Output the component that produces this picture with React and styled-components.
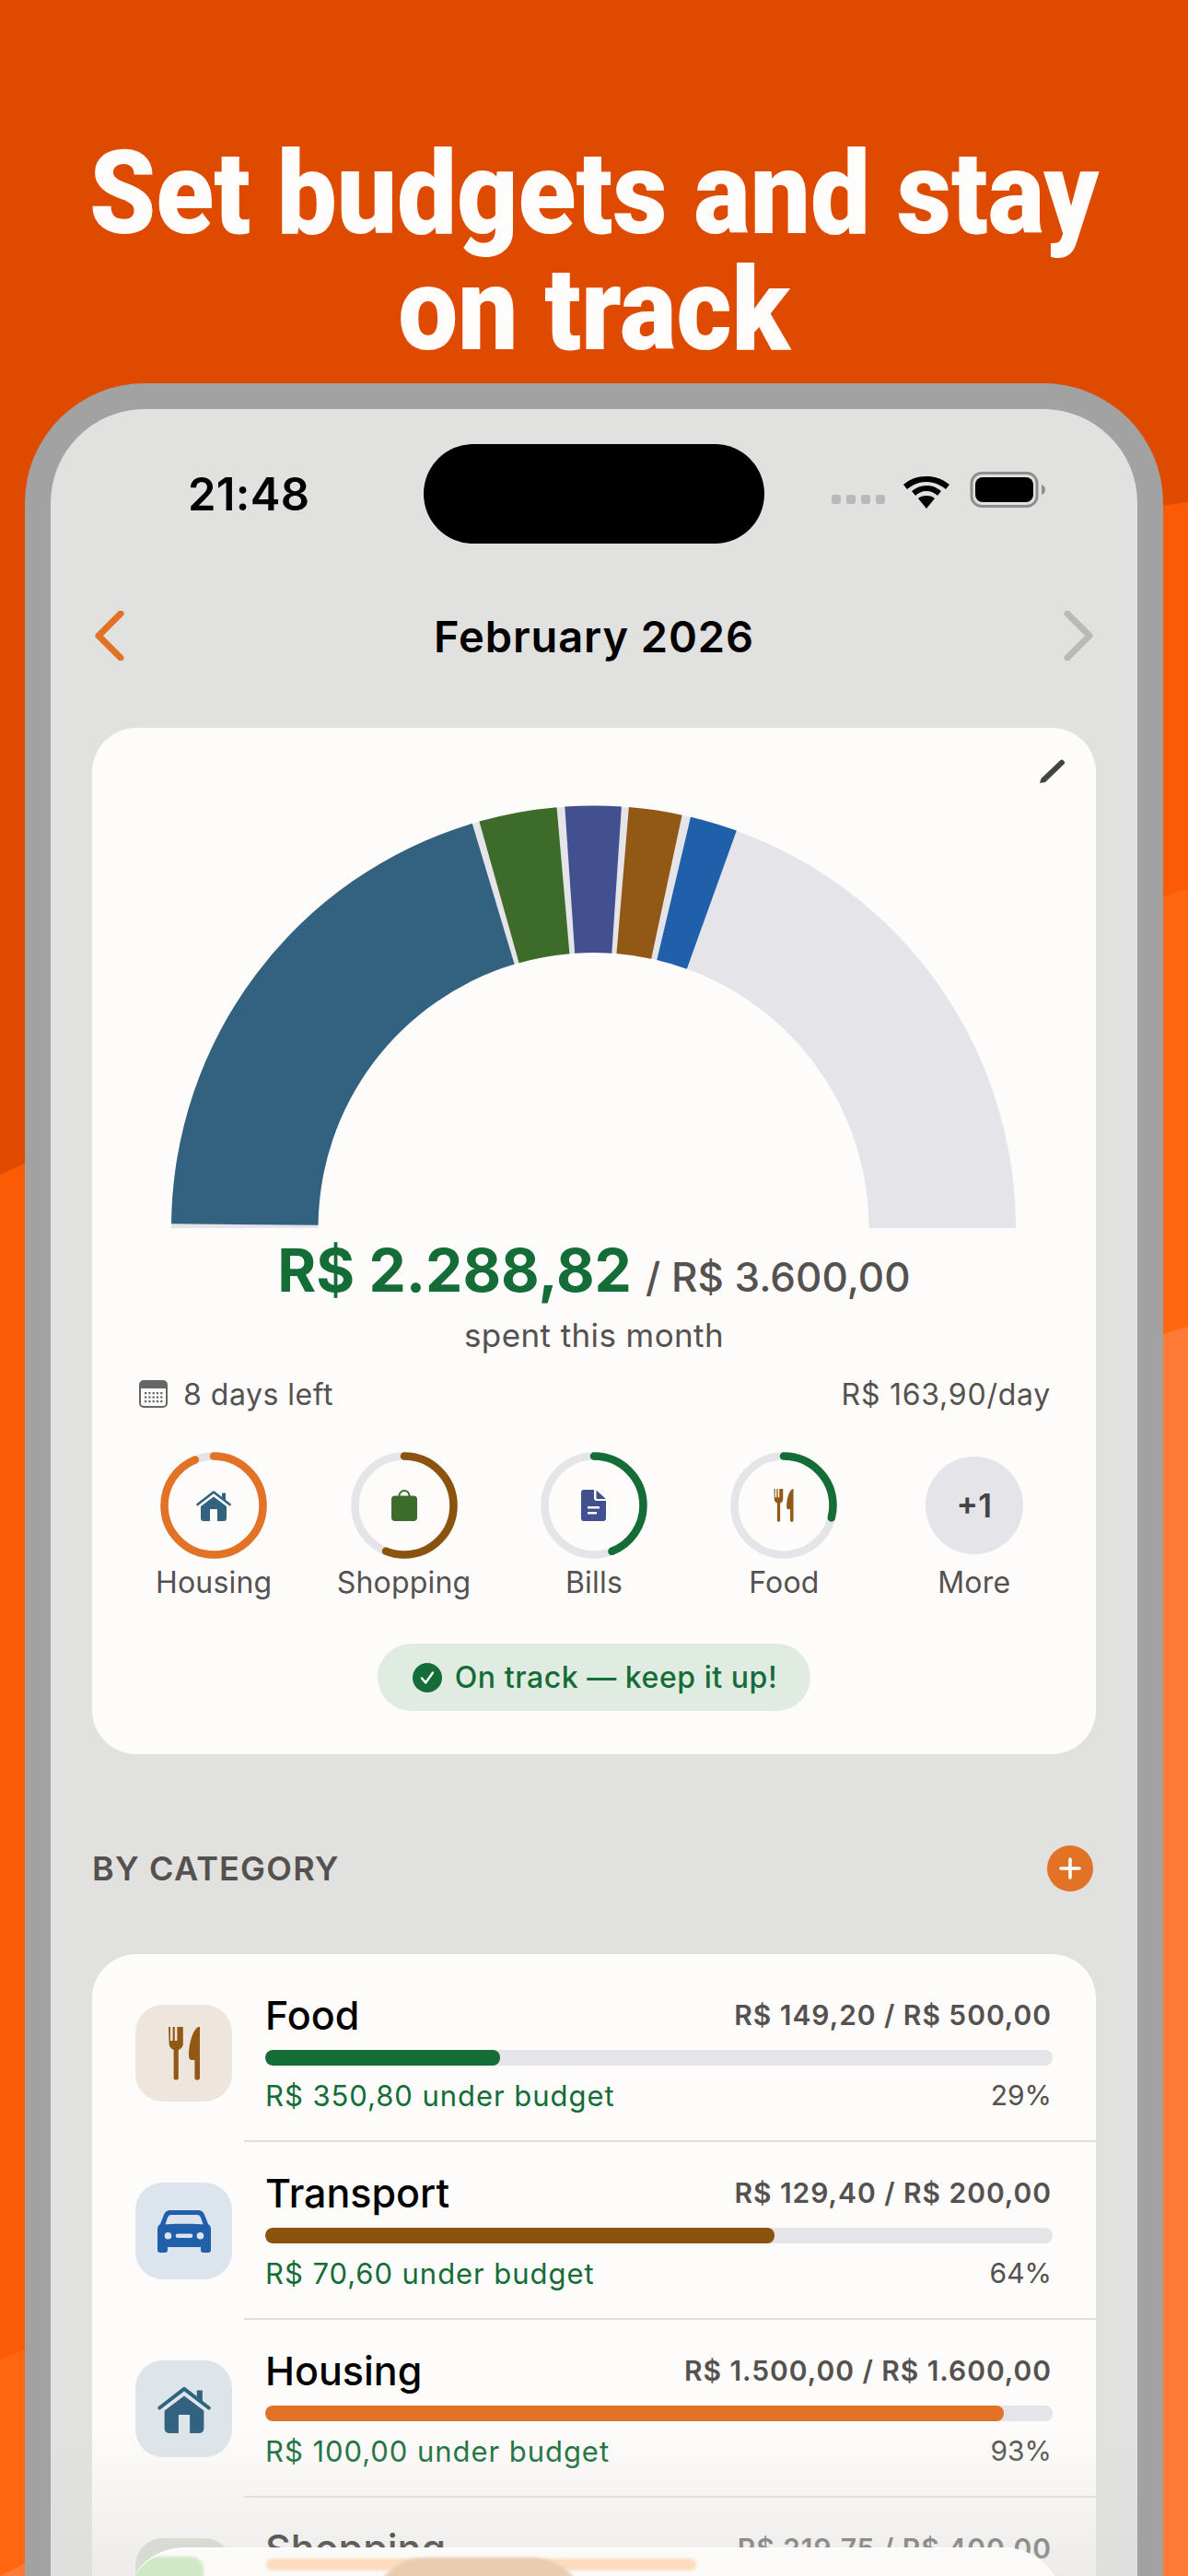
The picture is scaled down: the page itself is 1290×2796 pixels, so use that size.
import React from "react";
import styled, { createGlobalStyle } from "styled-components";

const Global = createGlobalStyle`
  html, body { margin: 0; padding: 0; background: #de4b00; }
  * { box-sizing: border-box; }
  #root { width: 1290px; height: 2796px; overflow: hidden; }
`;

const ORANGE = "#e27226";
const GREEN = "#146c37";
const GREY = "#555150";
const TRACK = "#e4e4e9";
const BLUE = "#32627f";
const OLIVE = "#3c6b2a";
const INDIGO = "#42508f";
const BROWN = "#925916";
const ROYAL = "#2060ab";

const Page = styled.div`
  position: relative;
  width: 1290px;
  height: 2796px;
  overflow: hidden;
  display: flex;
  flex-direction: column;
  font-family: Inter, "Liberation Sans", sans-serif;
`;
const Backdrop = styled.svg`
  position: absolute;
  inset: 0;
`;
const Headline = styled.h1`
  position: relative;
  margin: 147px 0 17px;
  font-family: Roboto, "Liberation Sans", sans-serif;
  font-weight: 900;
  font-size: 127px;
  line-height: 126px;
  color: #fffdfb;
  text-align: center;
  white-space: nowrap;
  transform: scaleX(0.91);
`;
const Bezel = styled.div`
  position: relative;
  flex: 1;
  min-height: 0;
  margin: 0 27px;
  padding: 28px 28px 0;
  background: #a2a2a2;
  border-radius: 130px 130px 0 0;
  display: flex;
`;
const Screen = styled.div`
  position: relative;
  flex: 1;
  min-height: 0;
  padding: 38px 45px 0;
  background: #e1e1df;
  border-radius: 102px 102px 0 0;
  overflow: hidden;
`;
const StatusBar = styled.div`
  display: flex;
  align-items: center;
  height: 108px;
`;
const Clock = styled.div`
  width: 360px;
  padding-left: 104px;
  font-size: 49px;
  font-weight: 600;
  letter-spacing: 0.3px;
  color: #000;
  white-space: nowrap;
`;
const Island = styled.div`
  width: 370px;
  height: 108px;
  border-radius: 54px;
  background: #000;
`;
const StatusIcons = styled.svg`
  margin-left: 73px;
  flex: none;
`;
const MonthNav = styled.div`
  margin-top: 70px;
  height: 60px;
  display: flex;
  align-items: center;
  justify-content: space-between;
  padding: 0 3px 0 3px;
`;
const MonthTitle = styled.div`
  font-size: 47px;
  font-weight: 600;
  letter-spacing: 0.9px;
  color: #000;
`;
const SummaryCard = styled.section`
  position: relative;
  margin-top: 70px;
  padding-bottom: 47px;
  background: #fdfcfa;
  border-radius: 48px;
`;
const EditIcon = styled.svg`
  position: absolute;
  top: 32px;
  right: 31px;
`;
const Gauge = styled.svg`
  display: block;
`;
const AmountLine = styled.div`
  margin-top: 8px;
  height: 72px;
  line-height: 72px;
  text-align: center;
  white-space: nowrap;
`;
const Spent = styled.span`
  font-size: 64px;
  font-weight: 700;
  color: ${GREEN};
`;
const Budget = styled.span`
  margin-left: 15px;
  font-size: 44px;
  font-weight: 500;
  color: ${GREY};
`;
const Caption = styled.div`
  margin-top: 12px;
  height: 44px;
  line-height: 44px;
  text-align: center;
  font-size: 35px;
  letter-spacing: 0.4px;
  color: ${GREY};
`;
const Stats = styled.div`
  margin-top: 22px;
  padding: 0 49px 0 51px;
  height: 40px;
  display: flex;
  align-items: center;
  justify-content: space-between;
  font-size: 32px;
  color: ${GREY};
`;
const DaysLeft = styled.div`
  display: flex;
  align-items: center;
  gap: 17px;
  letter-spacing: 0.5px;
`;
const PerDay = styled.div`
  letter-spacing: 0.75px;
`;
const RingRow = styled.div`
  margin-top: 43px;
  padding: 0 29px;
  display: grid;
  grid-template-columns: repeat(5, 1fr);
`;
const RingItem = styled.div`
  display: flex;
  flex-direction: column;
  align-items: center;
  gap: 6px;
`;
const RingBox = styled.div`
  position: relative;
  width: 116px;
  height: 116px;
  display: flex;
  align-items: center;
  justify-content: center;
`;
const RingSvg = styled.svg`
  position: absolute;
  inset: 0;
`;
const MoreDisc = styled.div`
  width: 106px;
  height: 106px;
  border-radius: 50%;
  background: ${TRACK};
  display: flex;
  align-items: center;
  justify-content: center;
  font-size: 35px;
  font-weight: 600;
  color: #444;
`;
const RingLabel = styled.div`
  height: 40px;
  line-height: 40px;
  font-size: 32px;
  letter-spacing: 0.2px;
  color: ${GREY};
`;
const PillWrap = styled.div`
  margin-top: 46px;
  display: flex;
  justify-content: center;
`;
const Pill = styled.div`
  height: 73px;
  padding: 0 36px 0 38px;
  display: flex;
  align-items: center;
  gap: 14px;
  border-radius: 37px;
  background: #e0ebe2;
  font-size: 32px;
  font-weight: 500;
  letter-spacing: 0.55px;
  color: ${GREEN};
`;
const SectionHead = styled.div`
  margin-top: 99px;
  height: 50px;
  display: flex;
  align-items: center;
  justify-content: space-between;
  padding-right: 3px;
`;
const SectionTitle = styled.h2`
  margin: 0;
  font-size: 36px;
  font-weight: 600;
  letter-spacing: 1.2px;
  color: ${GREY};
`;
const AddButton = styled.div`
  width: 50px;
  height: 50px;
  border-radius: 50%;
  background: ${ORANGE};
  display: flex;
  align-items: center;
  justify-content: center;
`;
const ListCard = styled.section`
  margin-top: 68px;
  padding-top: 11px;
  background: #fdfcfa;
  border-radius: 48px 48px 0 0;
`;
const Row = styled.div`
  height: 191px;
  padding: 0 47px;
  display: flex;
  gap: 36px;
`;
const Tile = styled.div`
  flex: none;
  width: 105px;
  height: 105px;
  margin-top: 44px;
  border-radius: 30px;
  background: ${(p) => p.$bg};
  display: flex;
  align-items: center;
  justify-content: center;
`;
const RowBody = styled.div`
  flex: 1;
  padding-top: 32px;
`;
const RowTop = styled.div`
  height: 46px;
  display: flex;
  align-items: center;
  justify-content: space-between;
`;
const RowName = styled.div`
  font-size: 43px;
  font-weight: 500;
  color: #000;
`;
const RowAmount = styled.div`
  font-size: 30px;
  font-weight: 600;
  letter-spacing: 0.95px;
  color: ${GREY};
  margin-right: 1px;
`;
const Bar = styled.div`
  margin-top: 15px;
  height: 17px;
  border-radius: 8px;
  background: ${TRACK};
  overflow: hidden;
`;
const BarFill = styled.div`
  height: 100%;
  border-radius: 8px;
  background: ${(p) => p.$color};
`;
const RowBottom = styled.div`
  margin-top: 12px;
  height: 40px;
  display: flex;
  align-items: center;
  justify-content: space-between;
`;
const Under = styled.span`
  font-size: 31px;
  letter-spacing: 0.95px;
  color: ${GREEN};
`;
const Percent = styled.span`
  font-size: 30px;
  color: ${GREY};
  margin-right: 1px;
`;
const Divider = styled.div`
  margin-left: 165px;
  height: 2px;
  background: #dfdfdd;
`;
const Fade = styled.div`
  position: absolute;
  left: 0;
  right: 0;
  bottom: 0;
  height: 160px;
  background: linear-gradient(rgba(222, 222, 220, 0), rgba(222, 222, 220, 0.55));
`;
const Glass = styled.div`
  position: absolute;
  left: 80px;
  right: 80px;
  bottom: -100px;
  height: 131px;
  border-radius: 70px;
  background: #fbfaf8;
  border-top: 2px solid #fff;
  overflow: hidden;
`;
const GlassBlob = styled.div`
  position: absolute;
  left: ${(p) => p.$x}px;
  top: ${(p) => p.$y}px;
  width: ${(p) => p.$w}px;
  height: ${(p) => p.$h}px;
  border-radius: ${(p) => p.$r}px;
  background: ${(p) => p.$c};
  filter: blur(1.500px);
`;

const polar = (cx, cy, r, deg) => {
  const a = (deg * Math.PI) / 180;
  return [cx + r * Math.sin(a), cy - r * Math.cos(a)];
};
const sector = (cx, cy, R, r, from, to) => {
  const [a, b] = polar(cx, cy, R, from);
  const [c, d] = polar(cx, cy, R, to);
  const [e, f] = polar(cx, cy, r, to);
  const [g, h] = polar(cx, cy, r, from);
  return `M${a} ${b}A${R} ${R} 0 0 1 ${c} ${d}L${e} ${f}A${r} ${r} 0 0 0 ${g} ${h}Z`;
};

const HouseIcon = ({ w, h }) => (
  <svg width={w} height={h} viewBox="0 0 38 34">
    <path d="M1.500 16 19 2.500 36.500 16" fill="none" stroke={BLUE} strokeWidth="2.600" strokeLinecap="round" strokeLinejoin="round" />
    <path d="M28 3.500h4v9l-4-3z" fill={BLUE} />
    <path fillRule="evenodd" d="M19 7.500 33 18v13a3 3 0 0 1-3 3H8a3 3 0 0 1-3-3V18zM15 21v13h8V21z" fill={BLUE} />
  </svg>
);
const BagIcon = () => (
  <svg width="30" height="34" viewBox="0 0 30 34">
    <path d="M9.500 8V6.500a5.500 5.500 0 0 1 11 0V8" fill="none" stroke={OLIVE} strokeWidth="2" />
    <rect x="1" y="6.500" width="28" height="27.500" rx="4" fill={OLIVE} />
  </svg>
);
const DocIcon = () => (
  <svg width="27" height="34" viewBox="0 0 27 34">
    <path fillRule="evenodd" d="M3 0h11v9a3 3 0 0 0 3 3h10v19a3 3 0 0 1-3 3H3a3 3 0 0 1-3-3V3a3 3 0 0 1 3-3zM7 18v2.400h13V18zM7 24v2.400h10V24z" fill={INDIGO} />
    <path d="M16.500 0.500 27 10h-9a1.500 1.500 0 0 1-1.500-1.500z" fill={INDIGO} />
  </svg>
);
const CutleryIcon = ({ w, h }) => (
  <svg width={w} height={h} viewBox="0 0 34 58">
    <path d="M0 0h2v15h2.600V0h2.200v15h2.600V0h2.200v0h2.200V0h2v18c0 4-3 6-5 7v30a2.600 2.600 0 0 1-5.200 0V25c-2-1-5-3-5-7z" fill={BROWN} />
    <path d="M33 0h1v55a2.800 2.800 0 0 1-5.600 0V36H26c-3 0-4-2-4-5C22 18 27 1 33 0z" fill={BROWN} />
  </svg>
);
const CarIcon = () => (
  <svg width="58" height="46" viewBox="0 0 58 46">
    <path
      fillRule="evenodd"
      d="M14 0h30c4 0 6 2 7.500 6L55 15c2 1 3 3 3 6v22a3 3 0 0 1-3 3h-5a3 3 0 0 1-3-3v-3H11v3a3 3 0 0 1-3 3H3a3 3 0 0 1-3-3V21c0-3 1-5 3-6l3.500-9C8 2 10 0 14 0zM15 5c-2 0-3 1-4 3l-2.500 7.500c6-1 35-1 41 0L47 8c-1-2-2-3-4-3zM11.500 24a3.800 3.800 0 1 0 0 7.600 3.800 3.800 0 0 0 0-7.600zM46.500 24a3.800 3.800 0 1 0 0 7.600 3.800 3.800 0 0 0 0-7.600zM22 25.500a2.300 2.300 0 0 0 0 4.600h14a2.300 2.300 0 0 0 0-4.600z"
      fill={ROYAL}
    />
  </svg>
);

const Ring = ({ pct, color, children }) => {
  const r = 53.5;
  const c = 2 * Math.PI * r;
  return (
    <RingBox>
      <RingSvg width="116" height="116" viewBox="0 0 116 116">
        <circle cx="58" cy="58" r={r} fill="none" stroke={TRACK} strokeWidth="8.500" />
        <circle
          cx="58"
          cy="58"
          r={r}
          fill="none"
          stroke={color}
          strokeWidth="8.500"
          strokeLinecap="round"
          strokeDasharray={`${(c * pct) / 100} ${c}`}
          transform="rotate(-90 58 58)"
        />
      </RingSvg>
      {children}
    </RingBox>
  );
};

const segments = [
  [0.6, -16.7, BLUE, -89.4],
  [-15.7, -5, OLIVE],
  [-3.9, 3.8, INDIGO],
  [4.8, 12.1, BROWN],
  [13.3, 19.8, ROYAL],
];

const rings = [
  { label: "Housing", pct: 93.7, color: ORANGE, icon: <HouseIcon w={38} h={34} /> },
  { label: "Shopping", pct: 56, color: "#8c530f", icon: <BagIcon /> },
  { label: "Bills", pct: 44, color: GREEN, icon: <DocIcon /> },
  { label: "Food", pct: 29, color: GREEN, icon: <CutleryIcon w={22} h={36} /> },
];

const rows = [
  { name: "Food", amount: "R$ 149,20 / R$ 500,00", under: "R$ 350,80 under budget", pct: "29%", width: 29.8, bar: GREEN, tile: "#eee6dc", icon: <CutleryIcon w={34} h={58} /> },
  { name: "Transport", amount: "R$ 129,40 / R$ 200,00", under: "R$ 70,60 under budget", pct: "64%", width: 64.7, bar: "#8c530f", tile: "#dce4ee", icon: <CarIcon /> },
  { name: "Housing", amount: "R$ 1.500,00 / R$ 1.600,00", under: "R$ 100,00 under budget", pct: "93%", width: 93.8, bar: ORANGE, tile: "#dde5ea", icon: <HouseIcon w={58} h={52} /> },
  { name: "Shopping", amount: "R$ 219,75 / R$ 400,00", under: "R$ 180,25 under budget", pct: "54%", width: 54.7, bar: "#fcd9b6", tile: "#d3d9cd", icon: <BagIcon /> },
];

export default function App() {
  return (
    <Page>
      <Global />
      <Backdrop width="1290" height="2796" viewBox="0 0 1290 2796">
        <rect width="1290" height="2796" fill="#de4b00" />
        <path d="M0 1275C300 1150 700 620 1290 545V2796H0z" fill="#fb5b04" />
        <path d="M0 2560C500 2400 900 1050 1290 965V2796H0z" fill="#ff6610" />
        <path d="M0 2796C600 2500 1000 1500 1290 1440V2796z" fill="#ff7a35" />
      </Backdrop>
      <Headline>
        Set budgets and stay
        <br />
        on track
      </Headline>
      <Bezel>
        <Screen>
          <StatusBar>
            <Clock>21:48</Clock>
            <Island />
            <StatusIcons width="235" height="50" viewBox="0 0 235 50">
              <g fill="#b8b8b8">
                <rect x="0" y="26" width="10" height="10" rx="3" />
                <rect x="16" y="26" width="10" height="10" rx="3" />
                <rect x="32" y="26" width="10" height="10" rx="3" />
                <rect x="48" y="26" width="10" height="10" rx="3" />
              </g>
              <path d="M103 6C93 6 85 9 78 15l4 5c6-5 13-8 21-8s15 3 21 8l4-5C121 9 113 6 103 6zM103 16c-6 0-11 2-16 6l4 5c3-3 7-5 12-5s9 2 12 5l4-5c-5-4-10-6-16-6zM94 30l9 11 9-11c-2-2-5-3-9-3s-7 1-9 3z" fill="#000" />
              <rect x="152" y="2.500" width="71" height="36" rx="11" fill="none" stroke="#8e8e8e" strokeWidth="3" />
              <rect x="156" y="7" width="63" height="27" rx="8" fill="#000" />
              <path d="M228 15c3 1 4 3 4 5.500s-1 4.500-4 5.500z" fill="#8e8e8e" />
            </StatusIcons>
          </StatusBar>
          <MonthNav>
            <svg width="32" height="54" viewBox="0 0 32 54">
              <path d="M28 3 4 27l24 24" fill="none" stroke={ORANGE} strokeWidth="7" strokeLinecap="round" strokeLinejoin="round" />
            </svg>
            <MonthTitle>February 2026</MonthTitle>
            <svg width="32" height="54" viewBox="0 0 32 54">
              <path d="M4 3l24 24L4 51" fill="none" stroke="#b9b9b7" strokeWidth="7" strokeLinecap="round" strokeLinejoin="round" />
            </svg>
          </MonthNav>

          <SummaryCard>
            <EditIcon width="32" height="30" viewBox="0 0 32 30">
              <path d="M2 28 3.500 23 24 3.500c1-1 2.500-1.300 3.500-.3l1 1c1 1 .8 2.300-.2 3.300L8 27z" fill="#444" />
            </EditIcon>
            <Gauge width="1090" height="545" viewBox="0 0 1090 545">
              <path d={sector(544.5, 543, 458.5, 299, -90, 90)} fill={TRACK} />
              {segments.map(([from, to, color, start]) => (
                <path key={color} d={sector(544.5, 543, 458.5, 299, start ?? from, to)} fill={color} />
              ))}
            </Gauge>
            <AmountLine>
              <Spent>R$ 2.288,82</Spent>
              <Budget>/ R$ 3.600,00</Budget>
            </AmountLine>
            <Caption>spent this month</Caption>
            <Stats>
              <DaysLeft>
                <svg width="31" height="30" viewBox="0 0 31 30">
                  <rect x="1" y="1" width="29" height="28" rx="4" fill="none" stroke="#666" strokeWidth="2" />
                  <path d="M1 5a4 4 0 0 1 4-4h21a4 4 0 0 1 4 4v4H1z" fill="#666" />
                  <g fill="#666">
                    {[0, 1, 2, 3, 4].map((x) =>
                      [0, 1, 2].map((y) => <rect key={`${x}${y}`} x={6 + x * 4.300} y={13 + y * 4.500} width="2.200" height="2.200" />)
                    )}
                  </g>
                </svg>
                8 days left
              </DaysLeft>
              <PerDay>R$ 163,90/day</PerDay>
            </Stats>
            <RingRow>
              {rings.map((ring) => (
                <RingItem key={ring.label}>
                  <Ring pct={ring.pct} color={ring.color}>
                    {ring.icon}
                  </Ring>
                  <RingLabel>{ring.label}</RingLabel>
                </RingItem>
              ))}
              <RingItem>
                <RingBox>
                  <MoreDisc>+1</MoreDisc>
                </RingBox>
                <RingLabel>More</RingLabel>
              </RingItem>
            </RingRow>
            <PillWrap>
              <Pill>
                <svg width="32" height="32" viewBox="0 0 32 32">
                  <circle cx="16" cy="16" r="16" fill={GREEN} />
                  <path d="M10 16.500l4.200 5L22 10.500" fill="none" stroke="#fff" strokeWidth="2.400" strokeLinecap="round" strokeLinejoin="round" />
                </svg>
                On track — keep it up!
              </Pill>
            </PillWrap>
          </SummaryCard>

          <SectionHead>
            <SectionTitle>BY CATEGORY</SectionTitle>
            <AddButton>
              <svg width="26" height="26" viewBox="0 0 26 26">
                <path d="M13 3v20M3 13h20" stroke="#fff" strokeWidth="3.600" strokeLinecap="round" />
              </svg>
            </AddButton>
          </SectionHead>

          <ListCard>
            {rows.map((row, i) => (
              <React.Fragment key={row.name}>
                <Row>
                  <Tile $bg={row.tile}>{row.icon}</Tile>
                  <RowBody>
                    <RowTop>
                      <RowName>{row.name}</RowName>
                      <RowAmount>{row.amount}</RowAmount>
                    </RowTop>
                    <Bar>
                      <BarFill $color={row.bar} style={{ width: `${row.width}%` }} />
                    </Bar>
                    <RowBottom>
                      <Under>{row.under}</Under>
                      <Percent>{row.pct}</Percent>
                    </RowBottom>
                  </RowBody>
                </Row>
                {i < rows.length - 1 && <Divider />}
              </React.Fragment>
            ))}
          </ListCard>
          <Fade />
          <Glass>
            <GlassBlob $x={0} $y={8} $w={86} $h={120} $r={14} $c="#cfe8c5" />
            <GlassBlob $x={154} $y={10} $w={467} $h={13} $r={6} $c="#fcdcbd" />
            <GlassBlob $x={267} $y={9} $w={235} $h={120} $r={60} $c="#e8cdb0" />
          </Glass>
        </Screen>
      </Bezel>
    </Page>
  );
}
